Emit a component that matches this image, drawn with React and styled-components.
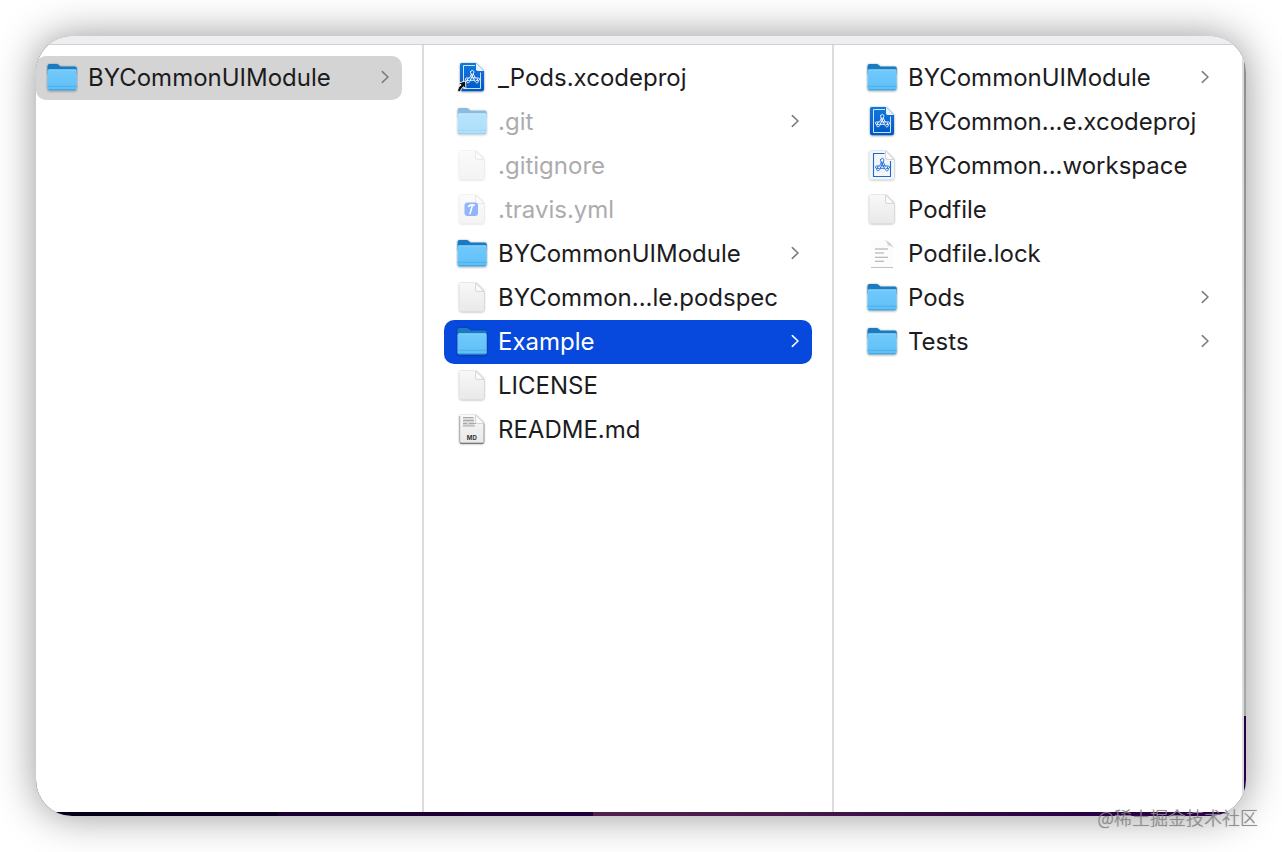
import React from "react";
import styled, { createGlobalStyle } from "styled-components";

const GlobalStyle = createGlobalStyle`
  *, *::before, *::after { box-sizing: border-box; }
  body {
    margin: 0;
    background: #fff;
    color: #1c1c1e;
    font-family: Inter, "Liberation Sans", sans-serif;
  }
`;

const Page = styled.div`
  display: flex;
  position: relative;
  min-height: 100vh;
  padding: 36px;
`;

const Desktop = styled.div`
  flex: 1;
  display: flex;
  min-width: 0;
  padding: 0 2px 4px 0;
  overflow: hidden;
  border-radius: 36px;
  background:
    linear-gradient(#8d8d8d, #a8a8a8) right top / 2px calc(100% - 100px) no-repeat,
    linear-gradient(90deg, #060018 0, #0a0020 20%, #1a0030 20%, #1e0038 46%, #52204e 46%, #48184c 62%, #340a44 76%, #2a0048 86%, #2a0048 100%);
  box-shadow: 0 0 40px rgba(0, 0, 0, 0.42);
`;

const Window = styled.main`
  flex: 1;
  display: flex;
  flex-direction: column;
  min-width: 0;
  border-right: 2px solid #dcdcdc;
  background: #fff;
`;

const Toolbar = styled.div`
  height: 9px;
  border-bottom: 1px solid #d0d0d2;
  background: #eeeef0;
`;

const Columns = styled.div`
  flex: 1;
  display: grid;
  grid-template-columns: 388fr 410fr 408fr;
`;

const Column = styled.ul`
  min-width: 0;
  margin: 0;
  padding: 11px 20px 20px ${(p) => (p.$flush ? 0 : 20)}px;
  border-right: ${(p) => (p.$last ? 0 : 2)}px solid #dcdcdc;
  list-style: none;
`;

const Row = styled.button`
  display: flex;
  align-items: center;
  gap: 10px;
  width: 100%;
  height: 44px;
  padding: 0 12px 0 ${(p) => (p.$flush ? 10 : 12)}px;
  border: 0;
  border-radius: 10px;
  background: ${(p) => ({ active: "#0649dc", trail: "#d4d4d4" })[p.$state] || "transparent"};
  color: ${(p) => (p.$state === "active" ? "#fff" : p.$hidden ? "#acacae" : "inherit")};
  font: inherit;
  font-size: 24px;
  line-height: 32px;
  text-align: left;
  cursor: default;

  > svg { flex: none; }
  > svg:first-child { opacity: ${(p) => (p.$hidden ? 0.5 : 1)}; }
`;

const Name = styled.span`
  flex: 1;
  min-width: 0;
  white-space: nowrap;
`;

const Arrow = styled.svg`
  color: ${(p) => (p.$state === "active" ? "#fff" : "#7c7c7e")};
`;

const Watermark = styled.div`
  position: absolute;
  right: 24px;
  bottom: 21px;
  color: #8a8a8a;
  font: 300 18px/28px "Noto Sans CJK SC", sans-serif;
  text-shadow: 0 0 1px rgba(110, 110, 110, 0.6);
`;

const Defs = styled.svg`
  position: absolute;
`;

function Gradients() {
  return (
    <Defs width="0" height="0" aria-hidden="true">
      <defs>
        <linearGradient id="folder" x1="0" y1="0" x2="0" y2="1">
          <stop offset="0" stopColor="#71c9fb" />
          <stop offset="1" stopColor="#5fc0f8" />
        </linearGradient>
        <linearGradient id="paper" x1="0" y1="0" x2="0" y2="1">
          <stop offset="0" stopColor="#f8f8f8" />
          <stop offset="1" stopColor="#e9e9e9" />
        </linearGradient>
        <linearGradient id="blueprint" x1="0" y1="0" x2="0" y2="1">
          <stop offset="0" stopColor="#0a78e0" />
          <stop offset="1" stopColor="#0558c4" />
        </linearGradient>
        <filter id="drop" x="-20%" y="-20%" width="140%" height="140%">
          <feDropShadow dx="0" dy="0.5" stdDeviation="0.8" floodOpacity="0.45" />
        </filter>
      </defs>
    </Defs>
  );
}

function Folder() {
  return (
    <g filter="url(#drop)">
      <path d="M1.500 4.200q0-2.200 2-2.200h7.200q1 0 1.800.7l1.900 1.700h14.600q1.700 0 1.700 1.700V12H1.500z" fill="#1d7ac0" />
      <path d="M1.500 9q0-1.600 1.600-1.600h26q1.600 0 1.600 1.600v17.500q0 1.700-1.700 1.700H3.200q-1.700 0-1.700-1.700z" fill="url(#folder)" />
      <path d="M2.500 7.900h27.500" stroke="#8ad6ff" strokeWidth="1" />
      <path d="M1.600 24.300h29" stroke="#49a8e2" strokeWidth="0.800" />
      <path d="M2.600 27.800h27" stroke="#3a94cf" strokeWidth="0.900" />
    </g>
  );
}

function Paper({ fill = "url(#paper)", fold = "#fdfdfd" }) {
  return (
    <g filter="url(#drop)">
      <path d="M4.600 1h15l8.400 8.400v18.200q0 1.700-1.700 1.700H5.300q-1.700 0-1.700-1.700V2q0-1 1-1z" fill={fill} />
      <path d="M19.600 1v6.900q0 1.500 1.500 1.500H28z" fill={fold} stroke="#b8b8b8" strokeWidth="0.600" />
    </g>
  );
}

function AppMark({ color }) {
  return (
    <g fill="none" stroke={color} strokeWidth="0.900" strokeLinecap="round" strokeLinejoin="round">
      <path d="M14.600 9.600q.6-1.400 2-1.200 1.700.5 1.200 2.200l-4.300 9.200q-.7 1.400-2 1-1.100-.8-.6-2.100l1.200-2.300" />
      <path d="M14.600 9.600q-.3 1 .2 1.900l4.700 8.500q.8 1.300 2 .8 1.300-.8.700-2l-1-1.900" />
      <path d="M15.600 11.800l-2 4.200h-3.100q-1.100.1-1.100 1.200t1.100 1.200h2.600M17.300 12.200l2 3.800h3.200q1.100.2 1.100 1.200t-1.100 1.200h-2.200M16 15.900h3.200M14.300 18.300h3.800" />
    </g>
  );
}

function Project({ alias }) {
  return (
    <>
      <g filter="url(#drop)">
        <path d="M5.500 1h14.500l8 8V27q0 2.300-2.300 2.300H6.300Q4 29.300 4 27V3q0-2 1.500-2z" fill="url(#blueprint)" />
        <path d="M20 1v6.300q0 1.700 1.700 1.700H28z" fill="#e9f1fa" />
      </g>
      <path d="M19 3.500H7.500v23h17V10.500" fill="none" stroke="#e2efff" strokeWidth="0.900" />
      <AppMark color="#fff" />
      {alias && (
        <path d="M2.500 21.200l7-2.300.4 8-2.400-2.200q-2.600 2-3.200 5H1.700q-.3-4.500 3.500-6.800z" fill="#111" stroke="#fff" strokeWidth="0.900" />
      )}
    </>
  );
}

function Workspace() {
  return (
    <>
      <Paper fill="#f3f6f9" />
      <path d="M18.500 3.500H7.500v23h17V11" fill="none" stroke="#1c68cc" strokeWidth="1.100" />
      <AppMark color="#1464dc" />
    </>
  );
}

function Yaml() {
  return (
    <>
      <Paper />
      <rect x="8.500" y="8.500" width="13.500" height="13.500" rx="3" fill="#2a6cf5" />
      <path d="M12.600 12.400q1.800-2 5.400-1.200" fill="none" stroke="#fff" strokeWidth="1.800" strokeLinecap="round" />
      <path d="M16.200 12.200l-2.200 7.400" fill="none" stroke="#fff" strokeWidth="1.600" strokeLinecap="round" />
    </>
  );
}

function Lines() {
  return (
    <>
      <path d="M5 2h13q3 .3 4.500 3.500 4 .8 4.500 4V30H5z" fill="#fcfcfc" />
      <path d="M15 1.500q4.500.2 6 3 .6 1.500.8 3 4.700.2 5.700 3-.4-3-3.200-5.500Q20.500 1.600 15 1.500z" fill="#d2d2d4" />
      <path d="M5 29.500h22" stroke="#c2c2c2" strokeWidth="1" />
      <path d="M9 11h13M9 15h9M9 19.200h13M9 23.200h9" stroke="#a6a6a8" strokeWidth="1.100" />
    </>
  );
}

function Markdown() {
  return (
    <>
      <Paper />
      <path d="M3.700 2v25.600q0 1.700 1.700 1.700h20.800q1.700 0 1.700-1.700V9.600" fill="none" stroke="#8c8c8c" strokeWidth="0.700" />
      <path d="M4.200 29.300h23.200" stroke="#6c6c6c" strokeWidth="1" />
      <rect x="7" y="3" width="11" height="9" fill="#b0b0b0" opacity="0.400" />
      <path d="M7 3.500h10M7 6.500h11M7 9.500h4M13 9.500h7M7 12h12" stroke="#929292" strokeWidth="0.700" />
      <text x="15.800" y="26" fontSize="6" fontWeight="700" fontFamily="Inter, sans-serif" textAnchor="middle" fill="#333">MD</text>
    </>
  );
}

const icons = {
  folder: <Folder />,
  paper: <Paper />,
  alias: <Project alias />,
  project: <Project />,
  workspace: <Workspace />,
  yaml: <Yaml />,
  lines: <Lines />,
  markdown: <Markdown />,
};

const columns = [
  [{ name: "BYCommonUIModule", icon: "folder", state: "trail" }],
  [
    { name: "_Pods.xcodeproj", icon: "alias" },
    { name: ".git", icon: "folder", hidden: true },
    { name: ".gitignore", icon: "paper", hidden: true },
    { name: ".travis.yml", icon: "yaml", hidden: true },
    { name: "BYCommonUIModule", icon: "folder" },
    { name: "BYCommon...le.podspec", icon: "paper" },
    { name: "Example", icon: "folder", state: "active" },
    { name: "LICENSE", icon: "paper" },
    { name: "README.md", icon: "markdown" },
  ],
  [
    { name: "BYCommonUIModule", icon: "folder" },
    { name: "BYCommon...e.xcodeproj", icon: "project" },
    { name: "BYCommon...workspace", icon: "workspace" },
    { name: "Podfile", icon: "paper" },
    { name: "Podfile.lock", icon: "lines" },
    { name: "Pods", icon: "folder" },
    { name: "Tests", icon: "folder" },
  ],
];

function Item({ name, icon, state, hidden, flush }) {
  return (
    <li>
      <Row type="button" $state={state} $hidden={hidden} $flush={flush}>
        <svg width="32" height="32" viewBox="0 0 32 32" aria-hidden="true">{icons[icon]}</svg>
        <Name>{name}</Name>
        {icon === "folder" && (
          <Arrow $state={state} width="10" height="16" viewBox="0 0 10 16" aria-hidden="true">
            <path d="M2.300 1.700l5.700 5.300-5.700 5.300" fill="none" stroke="currentColor" strokeWidth="1.600" strokeLinecap="round" strokeLinejoin="round" />
          </Arrow>
        )}
      </Row>
    </li>
  );
}

export default function App() {
  return (
    <Page>
      <GlobalStyle />
      <Gradients />
      <Desktop>
        <Window>
          <Toolbar />
          <Columns>
            {columns.map((items, i) => (
              <Column key={i} $flush={i === 0} $last={i === columns.length - 1}>
                {items.map((item) => (
                  <Item key={item.name} {...item} flush={i === 0} />
                ))}
              </Column>
            ))}
          </Columns>
        </Window>
      </Desktop>
      <Watermark>@稀土掘金技术社区</Watermark>
    </Page>
  );
}
